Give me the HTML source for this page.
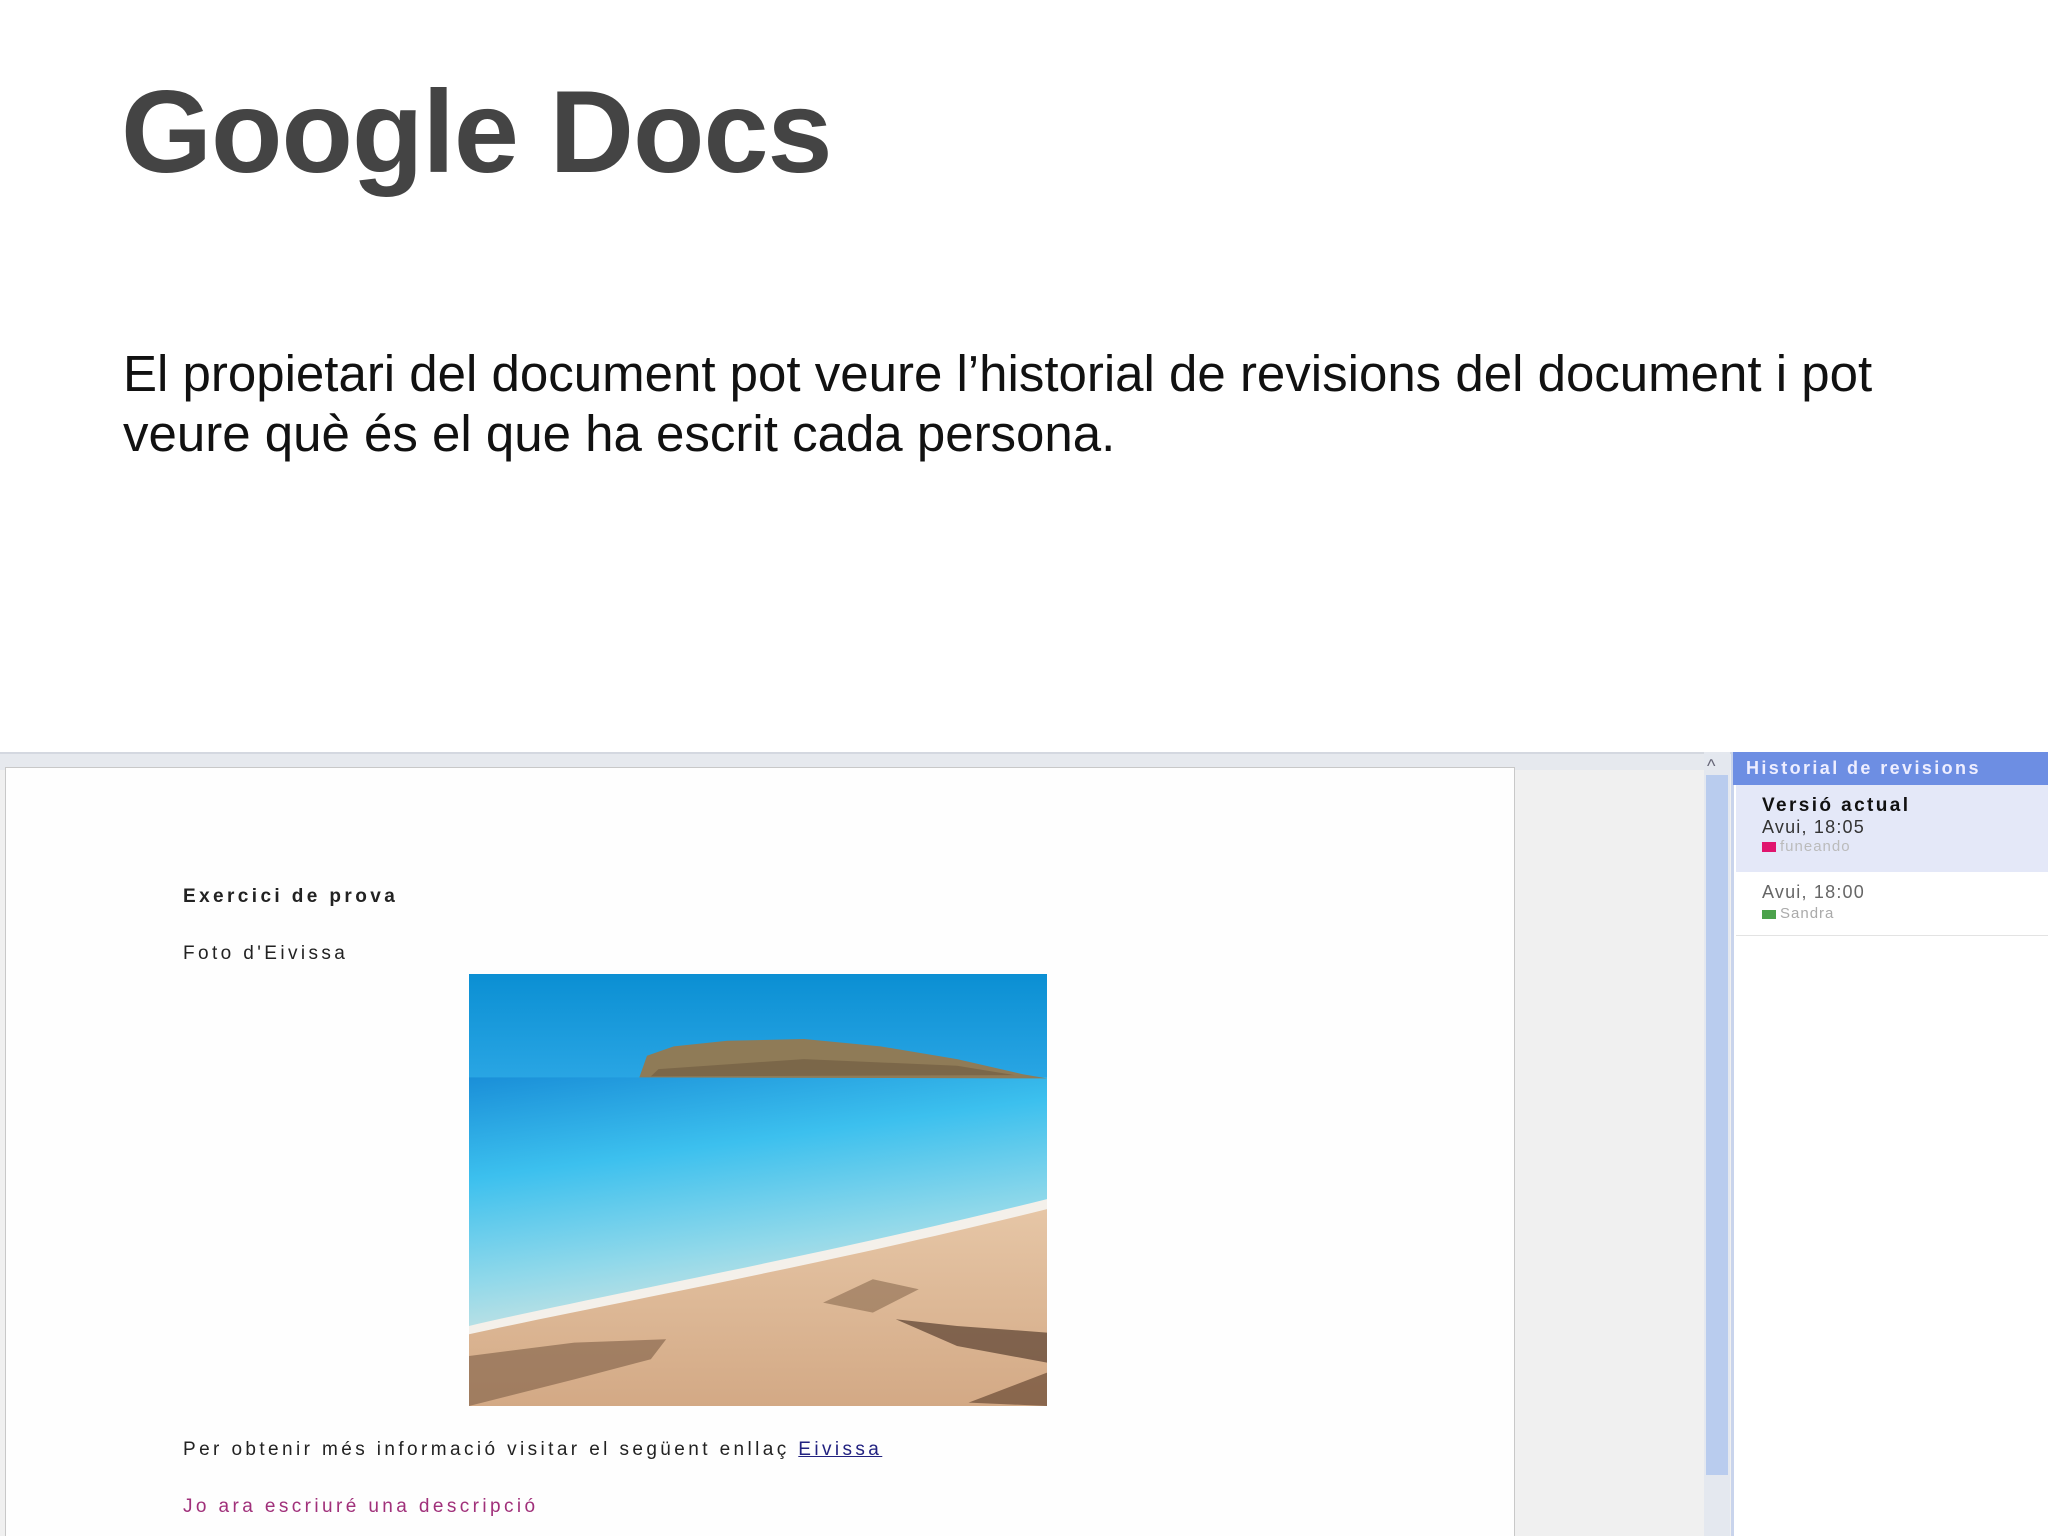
<!DOCTYPE html>
<html><head><meta charset="utf-8"><style>
html,body{margin:0;padding:0;width:2048px;height:1536px;overflow:hidden;background:#fff;font-family:"Liberation Sans",sans-serif;position:relative}
.a{position:absolute;white-space:nowrap}
h1{position:absolute;left:121px;top:64px;margin:0;font-size:117px;font-weight:bold;color:#444;font-family:"Liberation Sans",sans-serif;letter-spacing:-1px}
.p{left:123px;font-size:51px;color:#111}
.d{font-size:19px;color:#222;letter-spacing:3.4px}
</style></head><body>
<h1>Google Docs</h1>
<div class="a p" style="top:344px">El propietari del document pot veure l’historial de revisions del document i pot</div>
<div class="a p" style="top:404px">veure què és el que ha escrit cada persona.</div>

<div class="a" style="left:0;top:752px;width:2048px;height:784px;background:#f0f0f0"></div>
<div class="a" style="left:0;top:752px;width:1733px;height:16px;background:#e6e9ee;border-top:2px solid #d4d8e0"></div>
<div class="a" style="left:5px;top:767px;width:1508px;height:769px;background:#fefefe;border:1px solid #c8c8c8"></div>
<div class="a" style="left:1704px;top:752px;width:26px;height:784px;background:#e4e8ef"></div>
<div class="a" style="left:1706px;top:775px;width:22px;height:700px;background:#b9ccee"></div>
<div class="a" style="left:1707px;top:756px;font-size:18px;color:#667">^</div>
<div class="a" style="left:1731px;top:752px;width:317px;height:784px;background:#fff;border-left:3px solid #c9d4ec"></div>
<div class="a" style="left:1733px;top:752px;width:315px;height:33px;background:#6d8ee3"></div>
<div class="a" style="left:1746px;top:758px;font-size:18px;font-weight:bold;color:#eef;letter-spacing:2.4px">Historial de revisions</div>
<div class="a" style="left:1736px;top:785px;width:312px;height:87px;background:#e4e8f8"></div>
<div class="a" style="left:1736px;top:872px;width:312px;height:63px;background:#fff;border-bottom:1px solid #e3e3e3"></div>
<div class="a" style="left:1762px;top:795px;font-size:19px;font-weight:bold;color:#111;letter-spacing:2.4px">Versió actual</div>
<div class="a" style="left:1762px;top:817px;font-size:18px;color:#333;letter-spacing:1.2px">Avui, 18:05</div>
<div class="a" style="left:1762px;top:842px;width:14px;height:10px;background:#e0156e"></div>
<div class="a" style="left:1780px;top:838px;font-size:15px;color:#bbb;letter-spacing:1px">funeando</div>
<div class="a" style="left:1762px;top:882px;font-size:18px;color:#666;letter-spacing:1.2px">Avui, 18:00</div>
<div class="a" style="left:1762px;top:910px;width:14px;height:9px;background:#4ca24c"></div>
<div class="a" style="left:1780px;top:905px;font-size:15px;color:#aaa;letter-spacing:1px">Sandra</div>

<div class="a d" style="left:183px;top:886px;font-weight:bold">Exercici de prova</div>
<div class="a d" style="left:183px;top:943px">Foto d'Eivissa</div>
<svg class="a" style="left:469px;top:974px" width="578" height="432" viewBox="25 45 1510 1295" preserveAspectRatio="none">
<defs>
<linearGradient id="sky" x1="0" y1="0" x2="0" y2="1"><stop offset="0" stop-color="#0b8fd3"/><stop offset="1" stop-color="#2aa6e4"/></linearGradient>
<linearGradient id="sea" x1="0" y1="0" x2="0.3" y2="1"><stop offset="0" stop-color="#1a8fd8"/><stop offset="0.35" stop-color="#3cc0ee"/><stop offset="0.7" stop-color="#8fd8ea"/><stop offset="1" stop-color="#d9e6e0"/></linearGradient>
<linearGradient id="sand" x1="0" y1="0" x2="0" y2="1"><stop offset="0" stop-color="#e6c6a6"/><stop offset="1" stop-color="#d3a985"/></linearGradient>
</defs>
<rect x="25" y="45" width="1510" height="320" fill="url(#sky)"/>
<rect x="25" y="355" width="1510" height="800" fill="url(#sea)"/>
<path d="M470 355 L490 290 L560 262 L700 245 L900 240 L1100 262 L1300 300 L1470 345 L1535 358 Z" fill="#8f7b57"/>
<path d="M520 330 L900 300 L1300 320 L1450 348 L500 352 Z" fill="#6e5a40" opacity="0.6"/>
<path d="M25 1100 C400 1000 900 900 1535 720 L1535 1340 L25 1340 Z" fill="#f4f0ea"/>
<path d="M25 1125 C400 1030 900 930 1535 750 L1535 1340 L25 1340 Z" fill="url(#sand)"/>
<path d="M25 1190 L300 1150 L540 1140 L500 1200 L300 1260 L25 1340 Z" fill="#8a6a50" opacity="0.7"/>
<path d="M950 1030 L1080 960 L1200 990 L1080 1060 Z" fill="#8a6a50" opacity="0.6"/>
<path d="M1140 1080 L1300 1100 L1535 1120 L1535 1210 L1300 1160 Z" fill="#5a4030" opacity="0.7"/>
<path d="M1330 1330 L1535 1240 L1535 1340 Z" fill="#6a4a35" opacity="0.7"/>
</svg>
<div class="a d" style="left:183px;top:1439px">Per obtenir més informació visitar el següent enllaç <span style="color:#222280;text-decoration:underline">Eivissa</span></div>
<div class="a d" style="left:183px;top:1496px;color:#a0307a">Jo ara escriuré una descripció</div>
</body></html>
